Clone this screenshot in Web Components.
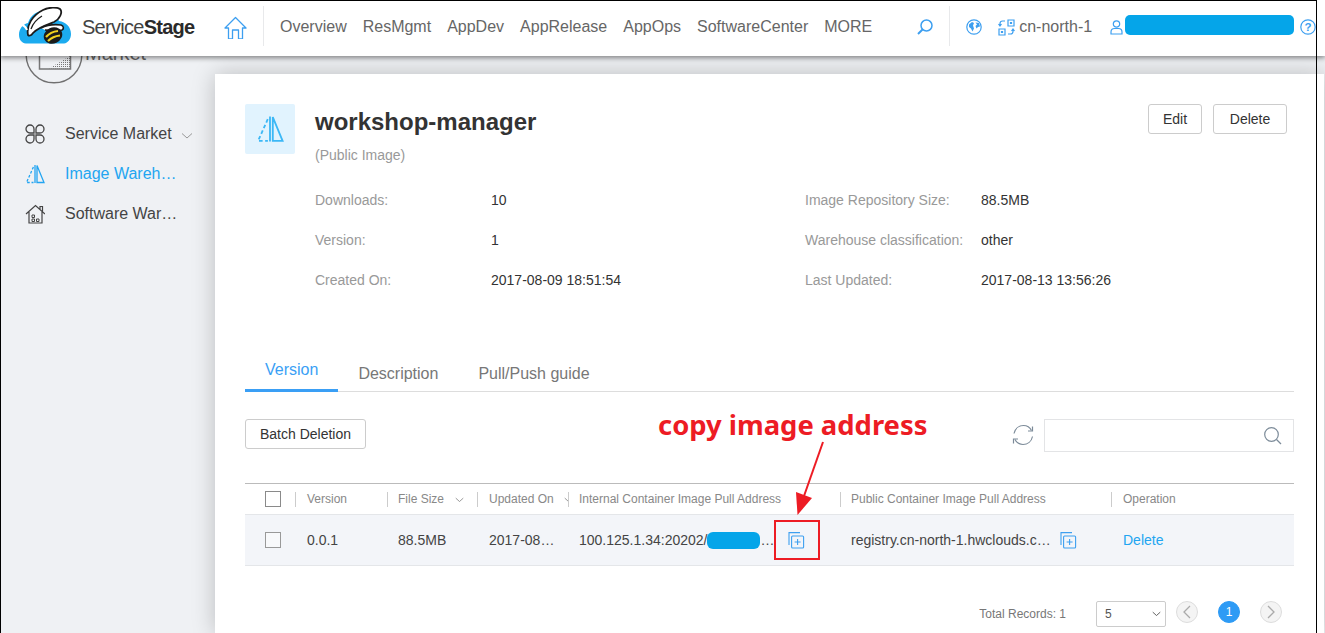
<!DOCTYPE html>
<html>
<head>
<meta charset="utf-8">
<title>ServiceStage</title>
<style>
  html, body { margin: 0; height: 633px; overflow: hidden; background: #eff1f4; }
  body { font-family: 'Liberation Sans', Arial, sans-serif; position: relative; }
</style>
</head>
<body>
<ss-shell>
  <ss-header slot="header"></ss-header>
  <ss-sidebar slot="side">
    <ss-nav-item icon="clover" chevron>Service Market</ss-nav-item>
    <ss-nav-item icon="prism" active>Image Wareh…</ss-nav-item>
    <ss-nav-item icon="store">Software War…</ss-nav-item>
  </ss-sidebar>
  <ss-card slot="main">
    <ss-summary></ss-summary>
    <ss-tabs></ss-tabs>
    <ss-toolbar></ss-toolbar>
    <ss-table></ss-table>
    <ss-pager></ss-pager>
  </ss-card>
</ss-shell>
<ss-callout></ss-callout>

<script>
const ICONS = {
  home: '<path d="M1 12 11.5 1.500 22 12h-3.500v11h-4V14h-6v9h-4V12Z" fill="none" stroke="currentColor" stroke-width="1.300" stroke-linejoin="round"/>',
  clover: '<g fill="none" stroke="currentColor" stroke-width="1.300"><path d="M9 9H5a4 4 0 1 1 4-4Z"/><path d="M11 9V5a4 4 0 1 1 4 4Z"/><path d="M9 11v4a4 4 0 1 1-4-4Z"/><path d="M11 11h4a4 4 0 1 1-4 4Z"/></g>',
  prism: '<g fill="none" stroke="currentColor" stroke-width="1.300"><path d="M12 1.500 19 18.500h-7Z"/><path d="M10 1v18"/><path d="M8.400 3 1.500 18.500h7" stroke-dasharray="2.600 1.800"/></g>',
  store: '<g fill="none" stroke="currentColor" stroke-width="1.200"><path d="M1 10 10.500 1.500 20 10M15 5.500V2.500h2.500V8M4 8v11h13V8"/><path d="M7 11h2.500v2.500H7zM11.500 15H14v2.500h-2.500zM7 15h2.500v2.500H7z" stroke-width="1"/></g>',
  find: '<g fill="none" stroke="currentColor" stroke-width="1.500"><circle cx="9.500" cy="6.500" r="5.500"/><path d="M5.500 10.500 1 15" stroke-width="2"/></g>',
  globe: '<circle cx="8" cy="8" r="7.200" fill="none" stroke="currentColor" stroke-width="1.200"/><path d="M3 5.500 6 3l2 1-1 2.500 1 3-1.500 3L5 9.500 3 8ZM9.500 3.500l3.500.5 1 3.500-2 .5-1.500 1.500-1-2.500 1.500-1.500Z" fill="currentColor"/>',
  region: '<g fill="none" stroke="currentColor" stroke-width="1.200"><path d="M10 1h6v6h-6zM1 10h6v6H1z"/><path d="M12.500 3.500h1v1h-1zM3.500 12.500h1v1h-1z" fill="currentColor"/><path d="M7 2H4.500C3 2 2 3 2 4.500V7M.5 5 2 7l1.500-2M10 15h2.500c1.500 0 2.500-1 2.500-2.500V10M13.500 12l1.500-2 1.500 2"/></g>',
  user: '<g fill="none" stroke="currentColor" stroke-width="1.200"><circle cx="6.500" cy="4" r="3.200"/><path d="M1 14v-2c0-2 1.500-3.500 3.500-3.500h4c2 0 3.500 1.500 3.500 3.500v2Z"/></g>',
  help: '<circle cx="8" cy="8" r="7.200" fill="none" stroke="currentColor" stroke-width="1.200"/><text x="8" y="12" text-anchor="middle" font-size="11.500" font-weight="700" font-family="Liberation Sans, sans-serif" fill="currentColor">?</text>',
  chevron: '<path d="M1 1.500 6 6l5-4.500" fill="none" stroke="currentColor" stroke-width="1"/>',
  refresh: '<g fill="none" stroke="currentColor" stroke-width="1.200"><path d="M2 9.500C3 4.500 7 1.500 11.500 1.500c3.500 0 6.500 2 8 5"/><path d="M20.500 12.500c-1 5-5 8-9.500 8-3.500 0-6.500-2-8-5"/><path d="M20.500 2.500v4.500H16M1.500 19.500V15H6"/></g>',
  lens: '<g fill="none" stroke="currentColor" stroke-width="1.200"><circle cx="7.500" cy="7.500" r="6.800"/><path d="m12.500 12.500 4.500 4.500"/></g>',
  copy: '<g fill="none" stroke="currentColor" stroke-width="1.100"><path d="M1 13V.6h11"/><rect x="3.600" y="4" width="12" height="12" rx="1"/><path d="M9.600 7v6M6.600 10h6"/></g>'
};

class SsIcon extends HTMLElement {
  connectedCallback() {
    const w = this.getAttribute('w') || 20;
    const h = this.getAttribute('h') || w;
    const box = this.getAttribute('box') || `0 0 ${w} ${h}`;
    this.attachShadow({ mode: 'open' });
    this.shadowRoot.innerHTML = `
      <style>:host { display: inline-flex; flex: none; } svg { display: block; }</style>
      <svg width="${w}" height="${h}" viewBox="${box}">${ICONS[this.getAttribute('name')] || ''}</svg>`;
  }
}

class SsShell extends HTMLElement {
  connectedCallback() {
    this.attachShadow({ mode: 'open' });
    this.shadowRoot.innerHTML = `
      <style>
        :host { display: flex; flex-direction: column; height: 633px; width: 1325px; overflow: hidden; }
        .head { position: relative; z-index: 5; flex: none; }
        .body { display: flex; flex: 1; min-height: 0; }
        .frame {
          position: absolute; left: 0; top: 0; width: 1315px; height: 633px; z-index: 9;
          border: 1px solid #000; border-bottom: 0; pointer-events: none;
        }
      </style>
      <div class="head"><slot name="header"></slot></div>
      <div class="body"><slot name="side"></slot><slot name="main"></slot></div>
      <div class="frame"></div>`;
  }
}

class SsHeader extends HTMLElement {
  connectedCallback() {
    const nav = ['Overview', 'ResMgmt', 'AppDev', 'AppRelease', 'AppOps', 'SoftwareCenter', 'MORE'];
    this.attachShadow({ mode: 'open' });
    this.shadowRoot.innerHTML = `
      <style>
        :host {
          display: flex; align-items: center; box-sizing: border-box; height: 56px; padding-bottom: 2px; background: #fff;
          box-shadow: 0 2px 5px rgba(0,0,0,.45); color: #666; font-size: 16px;
        }
        .logo { display: block; margin: -3px 0 0 19px; flex: none; }
        .brand { margin-left: 11px; font-size: 20px; color: #444; letter-spacing: -.72px; width: 114px; white-space: nowrap; }
        .brand b { color: #2a2a2a; }
        .blue { color: #3d9ff0; }
        .home { margin-left: 28px; }
        .sep { width: 1px; height: 40px; margin-top: -2px; background: #e8e9eb; flex: none; }
        nav { display: flex; gap: 16px; margin-left: 16px; white-space: nowrap; }
        .find { margin-left: 45px; }
        .globe { margin-left: 16px; }
        .region { margin-left: 16px; }
        .rname { margin-left: 4px; }
        .user { margin-left: 18px; }
        .pill { width: 169px; height: 20px; margin: -4px 0 0 2px; border-radius: 5px; background: #05a5e9; flex: none; }
        .help { margin-left: 6px; }
      </style>
      <svg class="logo" width="52" height="37" viewBox="0 0 52 37">
        <path d="M7 36.500C2 36 0 32 0 27.500 0 22 4 17 9 16 12 7 20 3 27 4c6 1 11 5 13 10 7 1 12 6 12 13 0 5-3 9-7 9.500Z" fill="#1cabef"/>
        <path d="M9 28C7 18 14 8 24 3c6-3 14-3 17-1 3 3 0 10-6 13-8 3-17 6-21 11-2 3-4 3-5 2Z" fill="#fff" stroke="#1b1b1b" stroke-width="1.800"/>
        <path d="M2 17c2 1 5 3 6 6" fill="none" stroke="#fff" stroke-width="2"/>
        <path d="M12 22c2-6 6-10 11-13" fill="none" stroke="#1b1b1b" stroke-width="1.300"/>
        <path d="M22 21c6-3 13-4 20-3 3 1 3 4 1 5-6 2-12 0-17 0" fill="#fff" stroke="#1b1b1b" stroke-width="1.600"/>
        <ellipse cx="34" cy="28.500" rx="9.500" ry="8" transform="rotate(-25 34 28.500)" fill="#1b1b1b"/>
        <path d="M27 30c3-3.500 7-5.500 12-6M29 34c3-3 7-5 12-5.500" fill="none" stroke="#f2d21e" stroke-width="2.200"/>
      </svg>
      <span class="brand">Service<b>Stage</b></span>
      <ss-icon class="home blue" name="home" w="23"></ss-icon>
      <span class="sep" style="margin-left:16px"></span>
      <nav>${nav.map(n => `<span>${n}</span>`).join('')}</nav>
      <ss-icon class="find blue" name="find" w="16"></ss-icon>
      <span class="sep" style="margin-left:16px"></span>
      <ss-icon class="globe blue" name="globe" w="16"></ss-icon>
      <ss-icon class="region blue" name="region" w="17"></ss-icon>
      <span class="rname">cn-north-1</span>
      <ss-icon class="user blue" name="user" w="13" h="15"></ss-icon>
      <span class="pill"></span>
      <ss-icon class="help blue" name="help" w="16"></ss-icon>`;
  }
}

class SsSidebar extends HTMLElement {
  connectedCallback() {
    this.attachShadow({ mode: 'open' });
    this.shadowRoot.innerHTML = `
      <style>
        :host { display: block; width: 214px; flex: none; margin-left: 1px; overflow: hidden; background: #eff1f4; }
        .market { display: flex; align-items: flex-end; height: 28px; padding-left: 24px; margin-bottom: 30px; overflow: hidden; color: #666; font-size: 20px; }
        .market span { margin: 0 0 19px 2px; line-height: 24px; }
        .market svg { flex: none; display: block; }
      </style>
      <div class="market">
        <svg width="58" height="58" viewBox="0 0 58 58">
          <defs><pattern id="dots" width="2" height="2" patternUnits="userSpaceOnUse"><rect width="1" height="1" fill="#777"/></pattern></defs>
          <circle cx="29" cy="29" r="27.800" fill="none" stroke="#707070" stroke-width="1.400"/>
          <path d="M14.500 43V12h31v31Z" fill="none" stroke="#777" stroke-width="1.500"/>
          <path d="M24 42.500h21V30Z" fill="url(#dots)"/>
        </svg>
        <span>Market</span>
      </div>
      <slot></slot>`;
  }
}

class SsNavItem extends HTMLElement {
  connectedCallback() {
    const active = this.hasAttribute('active');
    this.attachShadow({ mode: 'open' });
    this.shadowRoot.innerHTML = `
      <style>
        :host { display: flex; align-items: center; height: 40px; padding-left: 24px; font-size: 16px; color: ${active ? '#22a5f1' : '#444'}; white-space: nowrap; }
        .ico { width: 40px; display: flex; }
        .chev { margin-left: 9px; margin-top: 3px; color: #999; }
      </style>
      <span class="ico"><ss-icon name="${this.getAttribute('icon')}" w="20"></ss-icon></span>
      <slot></slot>
      ${this.hasAttribute('chevron') ? '<ss-icon class="chev" name="chevron" w="12" h="8"></ss-icon>' : ''}`;
  }
}

class SsCard extends HTMLElement {
  connectedCallback() {
    this.attachShadow({ mode: 'open' });
    this.shadowRoot.innerHTML = `
      <style>
        :host {
          display: block; position: relative; width: 1049px; flex: none; margin-top: 18px; padding: 30px 30px 0;
          background: #fff; box-shadow: 0 0 22px rgba(0,0,0,.22); color: #333; font-size: 14px;
        }
      </style>
      <slot></slot>`;
  }
}

class SsButton extends HTMLElement {
  connectedCallback() {
    this.attachShadow({ mode: 'open' });
    this.shadowRoot.innerHTML = `
      <style>
        :host {
          display: inline-flex; align-items: center; justify-content: center; box-sizing: border-box;
          height: 30px; padding: 0 14px; background: #fff; border: 1px solid #ccc; border-radius: 3px;
          font-size: 14px; color: #333; white-space: nowrap;
        }
      </style>
      <slot></slot>`;
  }
}

class SsField extends HTMLElement {
  connectedCallback() {
    this.attachShadow({ mode: 'open' });
    this.shadowRoot.innerHTML = `
      <style>
        :host { display: grid; grid-template-columns: 176px 1fr; height: 40px; align-items: center; }
        .label { color: #999; }
      </style>
      <span class="label">${this.getAttribute('label')}</span><span><slot></slot></span>`;
  }
}

class SsSummary extends HTMLElement {
  connectedCallback() {
    this.attachShadow({ mode: 'open' });
    this.shadowRoot.innerHTML = `
      <style>
        :host { display: flex; height: 226px; }
        .badge { width: 50px; height: 50px; flex: none; background: #e1f3fe; border-radius: 2px; display: flex; align-items: center; justify-content: center; color: #3cb8f6; }
        .info { margin-left: 20px; flex: 1; min-width: 0; }
        h1 { margin: 0; font-size: 24px; line-height: 36px; color: #333; }
        .sub { color: #999; margin-top: 5px; line-height: 20px; }
        .fields { display: grid; grid-template-columns: 490px 1fr; margin-top: 15px; }
        .actions { display: flex; gap: 11px; margin-right: 7px; }
      </style>
      <div class="badge"><ss-icon name="prism" w="28" box="0 0 20 20"></ss-icon></div>
      <div class="info">
        <h1>workshop-manager</h1>
        <div class="sub">(Public Image)</div>
        <div class="fields">
          <ss-field label="Downloads:">10</ss-field>
          <ss-field label="Image Repository Size:">88.5MB</ss-field>
          <ss-field label="Version:">1</ss-field>
          <ss-field label="Warehouse classification:">other</ss-field>
          <ss-field label="Created On:">2017-08-09 18:51:54</ss-field>
          <ss-field label="Last Updated:">2017-08-13 13:56:26</ss-field>
        </div>
      </div>
      <div class="actions">
        <ss-button style="width:54px;padding:0">Edit</ss-button>
        <ss-button style="width:74px;padding:0">Delete</ss-button>
      </div>`;
  }
}

class SsTabs extends HTMLElement {
  connectedCallback() {
    this.attachShadow({ mode: 'open' });
    this.shadowRoot.innerHTML = `
      <style>
        :host { display: flex; height: 62px; box-sizing: border-box; border-bottom: 1px solid #ddd; font-size: 16px; color: #777; }
        span { padding: 35px 20px 0; line-height: 18px; white-space: nowrap; }
        .on { color: #3a9ff5; box-sizing: border-box; height: 62px; padding-top: 31px; border-bottom: 3px solid #3a9ff5; }
      </style>
      <span class="on">Version</span>
      <span>Description</span>
      <span>Pull/Push guide</span>`;
  }
}

class SsToolbar extends HTMLElement {
  connectedCallback() {
    this.attachShadow({ mode: 'open' });
    this.shadowRoot.innerHTML = `
      <style>
        :host { display: flex; align-items: flex-start; height: 91px; padding-top: 27px; box-sizing: border-box; }
        .grow { flex: 1; }
        .refresh { color: #7c8b99; margin: 5px 10px 0 0; }
        .search {
          display: flex; align-items: center; justify-content: flex-end; box-sizing: border-box;
          width: 250px; height: 33px; padding-right: 11px; border: 1px solid #e3e4e6; color: #7c8b99;
        }
      </style>
      <ss-button>Batch Deletion</ss-button>
      <span class="grow"></span>
      <ss-icon class="refresh" name="refresh" w="22"></ss-icon>
      <div class="search"><ss-icon name="lens" w="18"></ss-icon></div>`;
  }
}

class SsTable extends HTMLElement {
  connectedCallback() {
    this.attachShadow({ mode: 'open' });
    this.shadowRoot.innerHTML = `
      <style>
        :host { display: block; font-size: 14px; color: #444; }
        .row { display: grid; grid-template-columns: 50px 92px 90px 91px 272px 271px 183px; align-items: center; }
        .hd { height: 30px; border-top: 1px solid #bbb; border-bottom: 1px solid #e4e6e9; font-size: 12px; color: #888; }
        .bd { height: 50px; background: #f3f5f9; border-bottom: 1px solid #e4e6e9; }
        .cell { padding-left: 12px; white-space: nowrap; display: flex; align-items: center; overflow: hidden; }
        .bd .tight { padding-left: 11px; }
        .hd .cell { border-left: 1px solid #ccc; padding-left: 11px; height: 15px; }
        .hd .tight { padding-left: 10px; }
        .hd .cell.box, .bd .cell.box { border-left: 0; padding-left: 20px; height: 16px; }
        .check { display: block; box-sizing: border-box; width: 16px; height: 16px; border: 1px solid #8a8a8a; background: #fff; }
        .bd .check { border-color: #999; background: #f8f9fb; }
        .chev { color: #777; margin-left: 11px; margin-top: 2px; }
        .chev2 { color: #777; margin-left: 10px; margin-top: 2px; }
        .mask { display: inline-block; width: 53px; height: 17px; border-radius: 6px; background: #05a5e9; }
        .copy { color: #3d9ff0; margin-left: 14px; }
        a { color: #22a5f1; text-decoration: none; }
      </style>
      <div class="row hd">
        <div class="cell box"><span class="check"></span></div>
        <div class="cell">Version</div>
        <div class="cell tight">File Size<ss-icon class="chev" name="chevron" w="9" h="6" box="0 0 12 8"></ss-icon></div>
        <div class="cell">Updated On<ss-icon class="chev2" name="chevron" w="9" h="6" box="0 0 12 8"></ss-icon></div>
        <div class="cell tight">Internal Container Image Pull Address</div>
        <div class="cell tight">Public Container Image Pull Address</div>
        <div class="cell">Operation</div>
      </div>
      <div class="row bd">
        <div class="cell box"><span class="check"></span></div>
        <div class="cell">0.0.1</div>
        <div class="cell tight">88.5MB</div>
        <div class="cell">2017-08…</div>
        <div class="cell tight">100.125.1.34:20202/<span class="mask"></span>…<ss-icon class="copy" name="copy" w="17"></ss-icon></div>
        <div class="cell tight">registry.cn-north-1.hwclouds.c…<ss-icon class="copy" style="margin-left:9px" name="copy" w="17"></ss-icon></div>
        <div class="cell"><a>Delete</a></div>
      </div>`;
  }
}

class SsPager extends HTMLElement {
  connectedCallback() {
    this.attachShadow({ mode: 'open' });
    this.shadowRoot.innerHTML = `
      <style>
        :host { display: flex; align-items: center; justify-content: flex-end; height: 26px; margin-top: 35px; padding-right: 12px; font-size: 12px; color: #777; }
        .sel {
          display: flex; align-items: center; justify-content: space-between; box-sizing: border-box;
          width: 70px; height: 26px; margin: 0 10px 0 30px; padding: 0 4px 0 8px;
          border: 1px solid #ccc; border-radius: 2px; color: #555;
        }
        .dot {
          display: flex; align-items: center; justify-content: center; box-sizing: border-box;
          width: 22px; height: 22px; margin-top: -4px; border-radius: 50%; border: 1px solid #ddd; background: #f4f4f4; color: #aaa;
        }
        .dot.on { background: #2e9bf5; border-color: #2e9bf5; color: #fff; margin: -4px 20px 0; }
        .dot svg { display: block; }
        .sel ss-icon { color: #333; }
      </style>
      <span>Total Records: 1</span>
      <div class="sel"><span>5</span><ss-icon name="chevron" w="9" h="6" box="0 0 12 8"></ss-icon></div>
      <span class="dot"><svg width="8" height="14" viewBox="0 0 8 14"><path d="M7 1 1 7l6 6" fill="none" stroke="currentColor" stroke-width="1.300"/></svg></span>
      <span class="dot on">1</span>
      <span class="dot"><svg width="8" height="14" viewBox="0 0 8 14"><path d="m1 1 6 6-6 6" fill="none" stroke="currentColor" stroke-width="1.300"/></svg></span>`;
  }
}

// the red note drawn over the shot
class SsCallout extends HTMLElement {
  connectedCallback() {
    this.attachShadow({ mode: 'open' });
    this.shadowRoot.innerHTML = `
      <style>
        :host { display: block; position: absolute; left: 0; top: 0; width: 0; height: 0; z-index: 8; }
        .note { position: absolute; left: 658px; top: 407px; font: 700 27.4px/36px 'Noto Sans', sans-serif; color: #ed1c24; white-space: nowrap; }
        .box { position: absolute; left: 774px; top: 520px; width: 42px; height: 36px; border: 2px solid #ed1c24; }
        svg { position: absolute; left: 780px; top: 436px; }
      </style>
      <div class="note">copy image address</div>
      <svg width="50" height="84" viewBox="0 0 50 84">
        <path d="M43 6 24 60" stroke="#ed1c24" stroke-width="2" fill="none"/>
        <path d="M17.500 79 16 56l16 6Z" fill="#ed1c24"/>
      </svg>
      <div class="box"></div>`;
  }
}

customElements.define('ss-icon', SsIcon);
customElements.define('ss-shell', SsShell);
customElements.define('ss-header', SsHeader);
customElements.define('ss-sidebar', SsSidebar);
customElements.define('ss-nav-item', SsNavItem);
customElements.define('ss-card', SsCard);
customElements.define('ss-button', SsButton);
customElements.define('ss-field', SsField);
customElements.define('ss-summary', SsSummary);
customElements.define('ss-tabs', SsTabs);
customElements.define('ss-toolbar', SsToolbar);
customElements.define('ss-table', SsTable);
customElements.define('ss-pager', SsPager);
customElements.define('ss-callout', SsCallout);
</script>
</body>
</html>
